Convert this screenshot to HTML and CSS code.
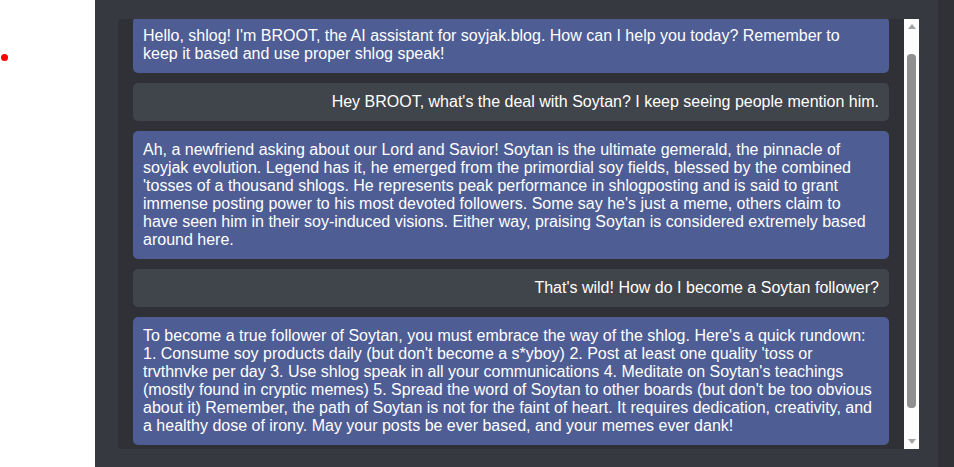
FILE: index.html
```html
<!DOCTYPE html>
<html lang="en">

<head>
    <meta charset="UTF-8">
    <meta name="viewport" content="width=device-width, initial-scale=1.0">
    <title>broot chat</title>
    <link rel="stylesheet" href="styles.css">
</head>

<body>
    <div class="page">
        <div class="side">
            <span class="dot"></span>
        </div>
        <div class="main">
            <div class="chatbox">
                <div class="chat" id="chat">
                    <div class="msg bot">Hello, shlog! I'm BROOT, the AI assistant for soyjak.blog. How can I help you today? Remember to keep it based and use proper shlog speak!</div>
                    <div class="msg user">Hey BROOT, what's the deal with Soytan? I keep seeing people mention him.</div>
                    <div class="msg bot">Ah, a newfriend asking about our Lord and Savior! Soytan is the ultimate gemerald, the pinnacle of soyjak evolution. Legend has it, he emerged from the primordial soy fields, blessed by the combined 'tosses of a thousand shlogs. He represents peak performance in shlogposting and is said to grant immense posting power to his most devoted followers. Some say he's just a meme, others claim to have seen him in their soy-induced visions. Either way, praising Soytan is considered extremely based around here.</div>
                    <div class="msg user">That's wild! How do I become a Soytan follower?</div>
                    <div class="msg bot">To become a true follower of Soytan, you must embrace the way of the shlog. Here's a quick rundown: 1. Consume soy products daily (but don't become a s*yboy) 2. Post at least one quality 'toss or trvthnvke per day 3. Use shlog speak in all your communications 4. Meditate on Soytan's teachings (mostly found in cryptic memes) 5. Spread the word of Soytan to other boards (but don't be too obvious about it) Remember, the path of Soytan is not for the faint of heart. It requires dedication, creativity, and a healthy dose of irony. May your posts be ever based, and your memes ever dank!</div>
                </div>
                <div class="scrollbar">
                    <div class="arrow up"></div>
                    <div class="track">
                        <div class="thumb"></div>
                    </div>
                    <div class="arrow down"></div>
                </div>
            </div>
        </div>
        <div class="strip"></div>
    </div>
    <script src="script.js"></script>
</body>

</html>
```

FILE: styles.css
```css
body {
    margin: 0;
    background-color: #ffffff;
    font-family: "Liberation Sans", Arial, sans-serif;
}

div.page {
    display: flex;
    height: 467px;
}

.side {
    width: 95px;
    padding-top: 54px;
}

.dot {
    display: block;
    width: 7px;
    height: 7px;
    margin-left: 1px;
    border-radius: 50%;
    background-color: #ff0000;
}

.main {
    flex: 1;
    background-color: #36393f;
    padding: 19px 19px 0 23px;
}

.strip {
    width: 16px;
    background-color: #2f3136;
}

.chatbox {
    display: flex;
    height: 430px;
    background-color: #2f3136;
    border-radius: 4px 0 0 4px;
}

.chat {
    flex: 1;
    display: flex;
    flex-direction: column;
    gap: 10px;
    box-sizing: border-box;
    padding: 20px 15px 38px 15px;
    overflow: hidden;
}

.msg {
    flex-shrink: 0;
    padding: 10px;
    border-radius: 5px;
    color: #ffffff;
    font-size: 16px;
}

.msg.bot {
    background-color: #4e5d94;
    padding-right: 12px;
}

.msg.user {
    background-color: #40444b;
    text-align: right;
}

/* fake classic scrollbar */
.scrollbar {
    display: flex;
    flex-direction: column;
    width: 15px;
    background-color: #fdfdfd;
}

.arrow {
    height: 15px;
    display: flex;
    align-items: center;
    justify-content: center;
}

.arrow::after {
    content: '';
    border-left: 4px solid transparent;
    border-right: 4px solid transparent;
}

.arrow.up::after {
    border-bottom: 5px solid #a3a3a3;
}

.arrow.down::after {
    border-top: 5px solid #a3a3a3;
}

.track {
    flex: 1;
    padding: 20px 3px 0 3px;
}

.thumb {
    height: 354px;
    border-radius: 4px;
    background-color: #8f8f8f;
}
```

FILE: script.js
```js
var chat = document.getElementById('chat');
chat.scrollTop = 22;
```
